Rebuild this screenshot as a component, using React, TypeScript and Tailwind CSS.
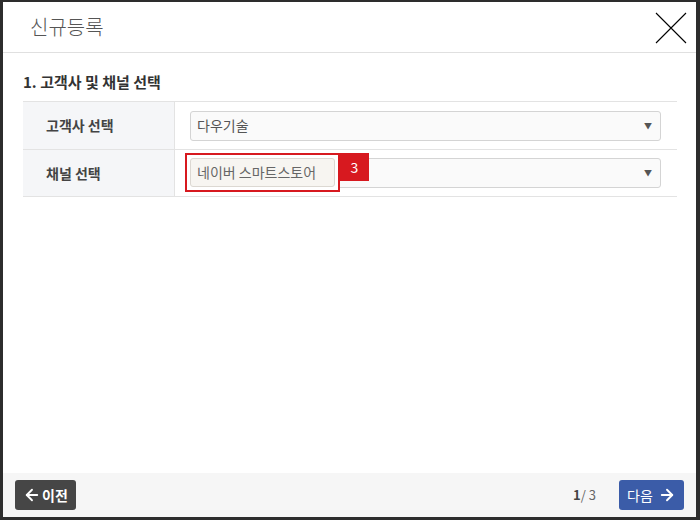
import { ArrowLeft, ArrowRight } from "lucide-react";

const font = { fontFamily: '"Noto Sans CJK KR", "Noto Sans", sans-serif' };

function SelectBox({ value }: { value: string }) {
  return (
    <div className="flex h-[30px] w-full items-center justify-between rounded-[3px] border border-[#d4d4d4] bg-[#fafafa] pl-[6px] pr-[8px] text-[14px] text-[#555]">
      <span>{value}</span>
      <span className="text-[8px] text-[#555]">▼</span>
    </div>
  );
}

function Row({ label, children, last }: { label: string; children: React.ReactNode; last?: boolean }) {
  return (
    <div className={`flex ${last ? "h-[47px]" : "h-[48px]"} border-b border-[#e3e3e3]`}>
      <div className="flex w-[152px] items-center border-r border-[#e3e3e3] bg-[#f5f6f8] pl-[23px] text-[14px] font-bold text-[#444]">
        {label}
      </div>
      <div className="relative flex flex-1 items-center pl-[15px] pr-[16px]">{children}</div>
    </div>
  );
}

export default function App() {
  return (
    <div className="h-[520px] w-[700px] bg-[#2d2d2d] pb-[3px] pl-[3px] pr-[4px] pt-[2px]" style={font}>
      <div className="flex h-full flex-col bg-white">
        <div className="flex h-[51px] items-center justify-between border-b border-[#e0e0e0] pl-[27px] pr-[9px]">
          <h1 className="text-[20px] font-light text-[#555]">신규등록</h1>
          <svg width="32" height="32" viewBox="0 0 32 32" className="mt-[2px]">
            <path d="M1 1 L31 31 M31 1 L1 31" stroke="#000" strokeWidth="1.1" fill="none" />
          </svg>
        </div>

        <div className="flex-1 pl-[20px] pr-[19px] pt-[18px]">
          <h2 className="mb-[9px] text-[15px] font-bold leading-[21px] text-[#333]">1. 고객사 및 채널 선택</h2>
          <div className="border-t border-[#e3e3e3]">
            <Row label="고객사 선택">
              <SelectBox value="다우기술" />
            </Row>
            <Row label="채널 선택" last>
              <SelectBox value="" />
              <div className="absolute left-[10px] top-[3px] flex">
                <div className="flex h-[39px] w-[155px] items-center border-2 border-[#d7191f] bg-white px-[3px]">
                  <div className="flex h-[29px] w-full items-center rounded-[3px] border border-[#dcd8d2] bg-[#f7f5f1] pl-[6px] text-[14px] text-[#666]">
                    네이버 스마트스토어
                  </div>
                </div>
                <div className="flex h-[28px] w-[29px] items-center justify-center bg-[#d7191f] text-[14px] text-white">
                  3
                </div>
              </div>
            </Row>
          </div>
        </div>

        <div className="flex h-[44px] items-start justify-between bg-[#f6f6f6] pl-[12px] pr-[12px] pt-[7px]">
          <button className="flex h-[30px] w-[61px] items-center justify-center gap-[1px] rounded-[3px] bg-[#464646] text-[14px] font-bold text-white">
            <ArrowLeft size={18} strokeWidth={2.5} />
            이전
          </button>
          <div className="flex items-center gap-[23px]">
            <span className="text-[13px] text-[#666]">
              <b className="text-[#444]">1</b>
              {"/ 3"}
            </span>
            <button className="flex h-[30px] w-[65px] items-center justify-center gap-[5px] rounded-[3px] bg-[#3b5ca8] text-[14px] text-white">
              다음
              <ArrowRight size={18} strokeWidth={2.5} />
            </button>
          </div>
        </div>
      </div>
    </div>
  );
}
